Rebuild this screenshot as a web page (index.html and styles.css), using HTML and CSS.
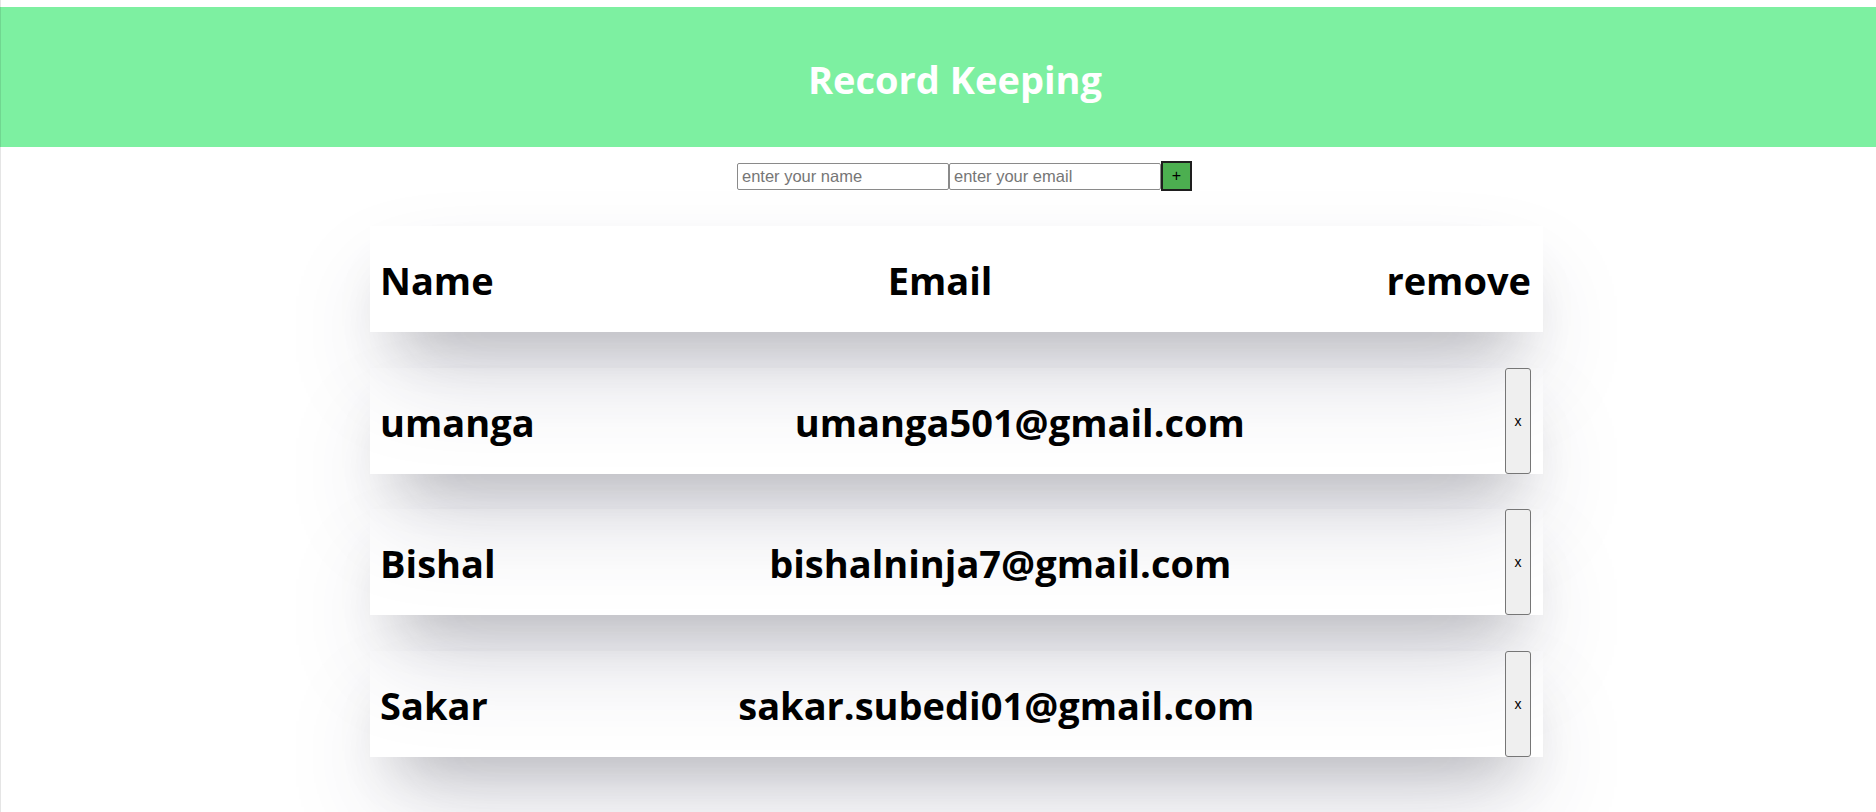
FILE: index.html
```html
<!DOCTYPE html>
<html lang="en">
<head>
<meta charset="utf-8">
<title>Record Keeping</title>
<link rel="stylesheet" href="styles.css">
</head>
<body>
<header class="topbar">
  <h1 class="title">Record Keeping</h1>
</header>
<form class="entry">
  <input class="field" type="text" placeholder="enter your name">
  <input class="field" type="email" placeholder="enter your email">
  <button class="add" type="button">+</button>
</form>
<main class="records">
  <div class="row">
    <h1 class="cell">Name</h1>
    <h1 class="cell">Email</h1>
    <h1 class="cell">remove</h1>
  </div>
  <div class="row">
    <h1 class="cell">umanga</h1>
    <h1 class="cell">umanga501@gmail.com</h1>
    <button class="del" type="button">x</button>
  </div>
  <div class="row">
    <h1 class="cell">Bishal</h1>
    <h1 class="cell">bishalninja7@gmail.com</h1>
    <button class="del" type="button">x</button>
  </div>
  <div class="row">
    <h1 class="cell">Sakar</h1>
    <h1 class="cell">sakar.subedi01@gmail.com</h1>
    <button class="del" type="button">x</button>
  </div>
</main>
</body>
</html>
```
FILE: styles.css
```css
html, body {
  margin: 0;
  padding: 0;
  background: #ffffff;
}
body {
  font-family: "Open Sans", "Noto Sans", sans-serif;
  color: #000;
  min-height: 812px;
  overflow: hidden;
}
body::before {
  content: "";
  position: fixed;
  left: 0;
  top: 0;
  width: 1px;
  height: 100%;
  background: rgba(0, 0, 0, 0.1);
  z-index: 5;
}
.topbar {
  margin-top: 7px;
  background: #7df0a1;
  padding: 46px 0 41px 34px;
}
.title {
  margin: 0;
  text-align: center;
  color: #ffffff;
  font-size: 38px;
  line-height: 53px;
  font-weight: 700;
}
.entry {
  display: flex;
  justify-content: center;
  align-items: center;
  margin: 14px 0 0;
  padding-left: 53px;
  height: 30px;
}
.field {
  box-sizing: border-box;
  width: 212px;
  height: 27px;
  margin: 0;
  padding: 1px 4px;
  border: 1px solid #8a8a8a;
  border-radius: 2px;
  font-family: "Liberation Sans", Arial, sans-serif;
  font-size: 16.5px;
  background: #fff;
}
.field::placeholder {
  color: #767676;
}
.add {
  box-sizing: border-box;
  width: 31px;
  height: 30px;
  margin: 0;
  padding: 0;
  background: #4caf50;
  border: 2px solid #1e1e1e;
  font-family: "Liberation Sans", Arial, sans-serif;
  font-size: 16px;
  color: #000;
}
.records {
  width: 1173px;
  margin: 35px 0 0 calc(50% - 568px);
  display: flex;
  flex-direction: column;
  gap: 35.67px;
}
.row {
  display: flex;
  justify-content: space-between;
  padding: 0 12px 0 10px;
  box-shadow: rgba(50, 50, 93, 0.25) 0px 50px 100px -20px, rgba(0, 0, 0, 0.3) 0px 30px 60px -30px;
}
.cell {
  margin: 28px 0 25px;
  font-size: 38px;
  line-height: 53px;
  font-weight: 700;
  white-space: nowrap;
}
.del {
  box-sizing: border-box;
  width: 26px;
  margin: 0;
  padding: 0;
  background: #efefef;
  border: 1px solid #767676;
  border-radius: 3px;
  font-family: "Liberation Sans", Arial, sans-serif;
  font-size: 14px;
  color: #000;
}
```
